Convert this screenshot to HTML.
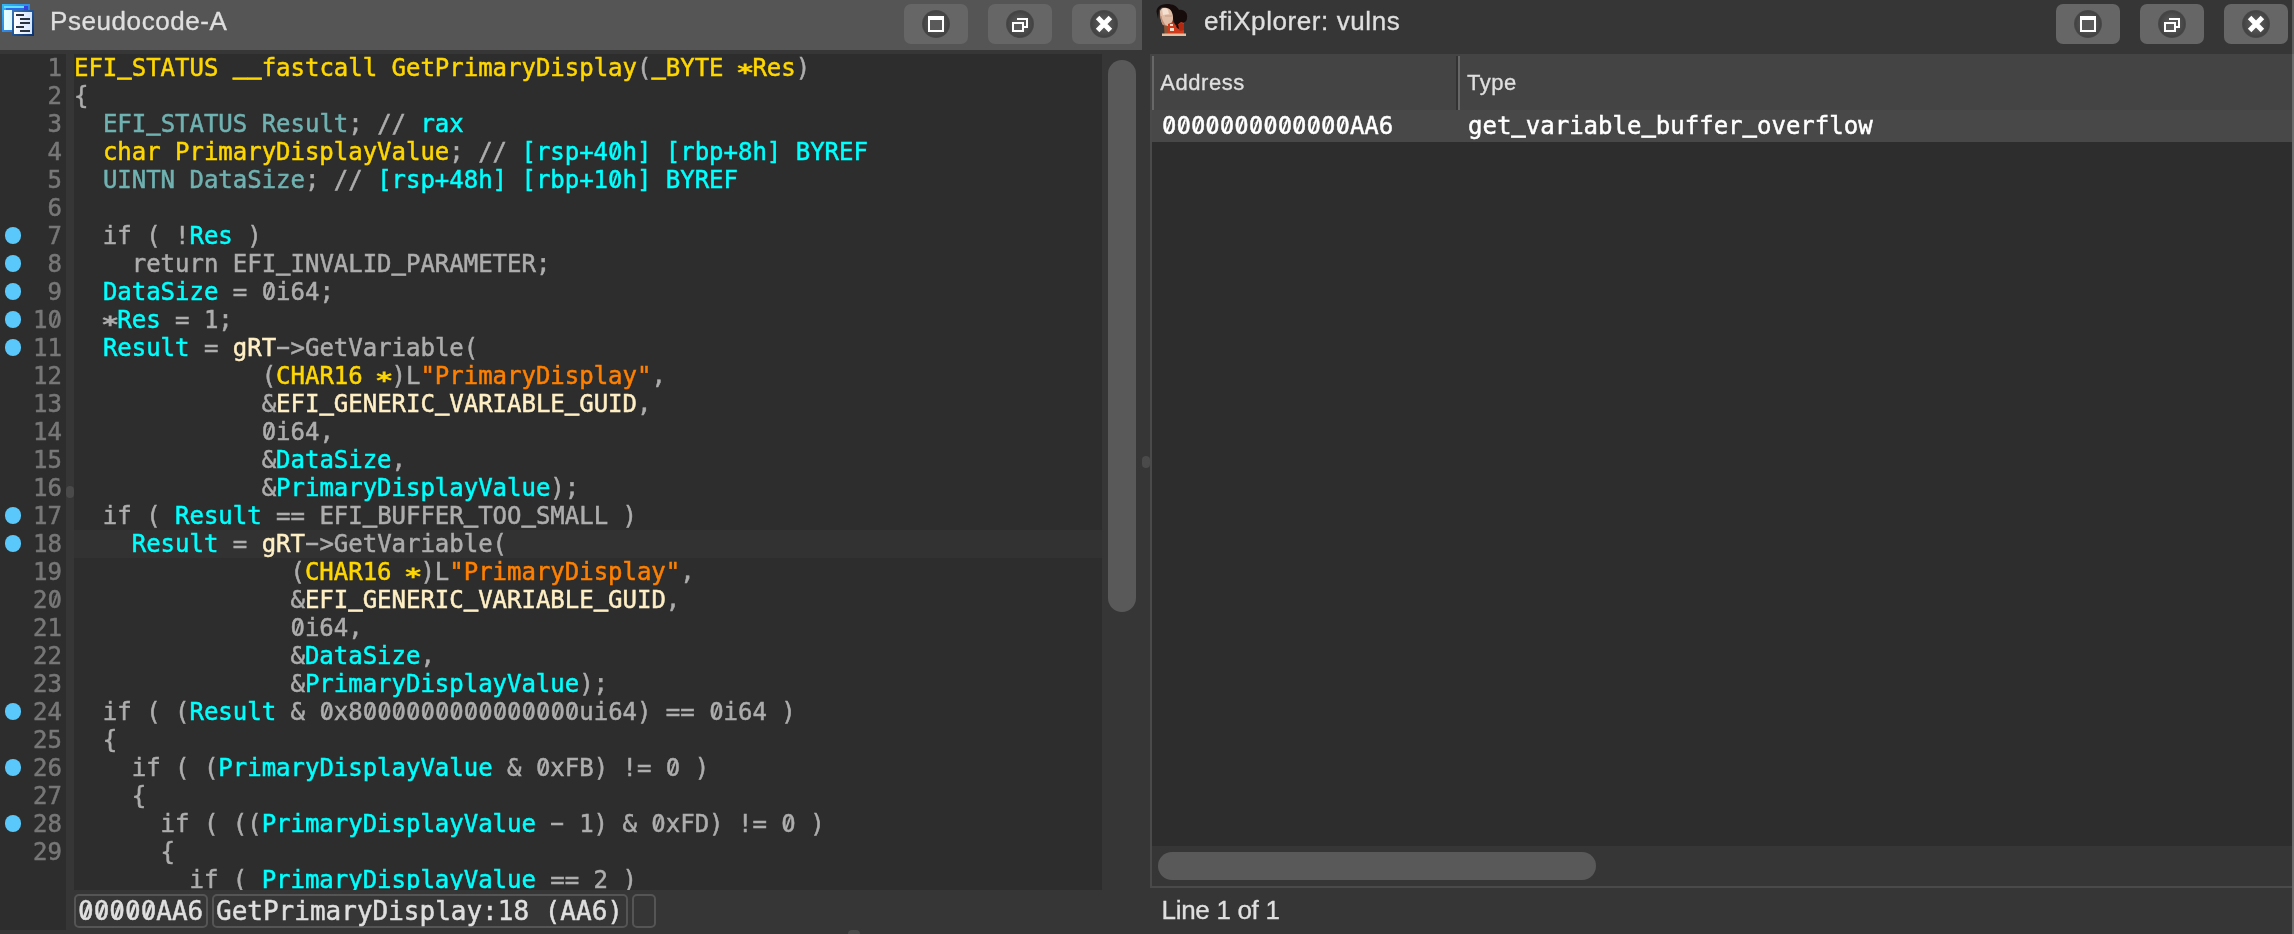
<!DOCTYPE html>
<html lang="en">
<head>
<meta charset="utf-8">
<title>Pseudocode-A / efiXplorer: vulns</title>
<style>
*{box-sizing:border-box;margin:0;padding:0}
html,body{width:2294px;height:934px;overflow:hidden;background:#363636}
body{position:relative;font-family:"Liberation Sans",sans-serif;color:#dfdfdf}
#root{position:absolute;left:0;top:0;width:2294px;height:934px;will-change:transform}
.abs{position:absolute}
.mono{font-family:"DejaVu Sans Mono","Liberation Mono",monospace;-webkit-text-stroke:0.5px}
/* title bars */
#ltitle{left:0;top:0;width:1142px;height:50px;background:#555}
.ttl{-webkit-text-stroke:0.35px;letter-spacing:0.58px;position:absolute;top:6px;height:30px;line-height:30px;font-size:26px;color:#dfdfdf;white-space:nowrap}
.btn{position:absolute;top:4px;width:64px;height:40px;border-radius:7px;background:#666}
.btn svg{position:absolute;left:18px;top:6px;width:28px;height:28px}
/* left panel */
#gutter{left:0;top:54px;width:66px;height:876px;background:#2d2d2d}
#code{left:74px;top:54px;width:1028px;height:836px;background:#2d2d2d;overflow:hidden}
#hl{left:0;top:476px;width:1028px;height:28px;background:#323232}
.ln{position:absolute;left:0;width:62px;height:28px;line-height:28px;font-size:24px;text-align:right;color:#777;white-space:pre}
.cl{letter-spacing:-0.016px;position:absolute;left:0;height:28px;line-height:28px;font-size:24px;color:#adadad;white-space:pre}
.dot{position:absolute;left:4.6px;width:16.8px;height:16.8px;margin-top:-0.9px;border-radius:50%;background:#5ac8fa}
.u{display:inline-block;line-height:28px;transform-origin:50% 27.5px;transform:translateY(-2.4px) scaleY(1.45)}
.z{position:relative}
.z::before{content:"";position:absolute;left:.206em;top:.467em;width:.19em;height:.19em;border-radius:50%;background:var(--bg,#2d2d2d)}
.sb{--bg:#363636}.cell{--bg:#484848}
.z::after{content:"";position:absolute;left:.25em;top:.29em;width:.1em;height:.54em;background:currentColor;transform:rotate(20deg);border-radius:1px}
.a{display:inline-block;-webkit-text-stroke:0.9px;transform:translateY(5px) scale(1.3,0.92)}
.h{display:inline-block;transform:translateY(-1.5px) scaleX(1.85)}
.y{color:#ffd700}.c{color:#00ffff}.t{color:#70b2b2}.o{color:#ff8000}.m{color:#ffefc5}
#vthumb{left:1108px;top:60px;width:28px;height:552px;border-radius:14px;background:#595959}
.sb{position:absolute;top:894px;height:34px;border:2px solid #555;border-radius:5px;font-size:26px;line-height:30px;color:#dfdfdf;white-space:pre;padding-left:2px}
/* right panel */
#tbl{left:1150px;top:54px;width:1142px;height:834px;background:#2d2d2d;border:2px solid #4a4a4a;border-top:none;border-right:none}
#thead{left:1150px;top:54px;width:1142px;height:56px;background:#444}
#trow{left:1152px;top:110px;width:1140px;height:32px;background:#484848}
.hsep{position:absolute;top:56px;width:2px;height:54px;background:#676767}
.hd{-webkit-text-stroke:0.35px;letter-spacing:0.55px;position:absolute;top:68px;height:30px;line-height:30px;font-size:22px;color:#dfdfdf}
.cell{position:absolute;top:110px;height:32px;line-height:32px;font-size:24px;color:#fff;white-space:pre}
#hscroll{left:1152px;top:846px;width:1140px;height:40px;background:#363636}
#hthumb{left:1158px;top:852px;width:438px;height:28px;border-radius:14px;background:#595959}
</style>
</head>
<body>
<div id="root">
<!-- LEFT TITLE BAR -->
<div id="ltitle" class="abs"></div>
<div class="ttl" style="left:50px">Pseudocode-A</div>
<div class="ttl" style="left:1204px">efiXplorer: vulns</div>

<svg width="0" height="0" style="position:absolute">
<defs>
<radialGradient id="cg" cx="50%" cy="50%" r="50%"><stop offset="0" stop-color="#5e5e5e"/><stop offset="0.55" stop-color="#505050"/><stop offset="0.9" stop-color="#434343"/><stop offset="1" stop-color="#4a4a4a"/></radialGradient>
<linearGradient id="ib1" x1="0" y1="0" x2="1" y2="1"><stop offset="0" stop-color="#35b6f6"/><stop offset="1" stop-color="#2b5fd6"/></linearGradient>
<linearGradient id="ib2" x1="0" y1="0" x2="1" y2="1"><stop offset="0" stop-color="#3a78b8"/><stop offset="1" stop-color="#0a2f6e"/></linearGradient>
<linearGradient id="ib3" x1="0" y1="0" x2="1" y2="0"><stop offset="0" stop-color="#e8ffff"/><stop offset="1" stop-color="#c6ecff"/></linearGradient>
<linearGradient id="ib4" x1="0" y1="0" x2="1" y2="0"><stop offset="0" stop-color="#ffffff"/><stop offset="1" stop-color="#d4e6ff"/></linearGradient>
</defs></svg>
<div class="btn" style="left:904px"><svg viewBox="0 0 28 28"><circle cx="14" cy="14" r="14" fill="url(#cg)"/><rect x="6" y="6" width="16" height="16" fill="#fff"/><rect x="8" y="10" width="12" height="10" fill="#5a5a5a"/></svg></div>
<div class="btn" style="left:988px"><svg viewBox="0 0 28 28"><circle cx="14" cy="14" r="14" fill="url(#cg)"/><path d="M11 9H21V17H18" fill="none" stroke="#fff" stroke-width="2"/><rect x="7" y="13" width="10" height="8" fill="#5a5a5a" stroke="#fff" stroke-width="2"/></svg></div>
<div class="btn" style="left:1072px"><svg viewBox="0 0 28 28"><circle cx="14" cy="14" r="14" fill="url(#cg)"/><path d="M7.6 7.6L20.4 20.4M20.4 7.6L7.6 20.4" stroke="#fff" stroke-width="5" stroke-linecap="butt"/></svg></div>
<div class="btn" style="left:2056px"><svg viewBox="0 0 28 28"><circle cx="14" cy="14" r="14" fill="url(#cg)"/><rect x="6" y="6" width="16" height="16" fill="#fff"/><rect x="8" y="10" width="12" height="10" fill="#5a5a5a"/></svg></div>
<div class="btn" style="left:2140px"><svg viewBox="0 0 28 28"><circle cx="14" cy="14" r="14" fill="url(#cg)"/><path d="M11 9H21V17H18" fill="none" stroke="#fff" stroke-width="2"/><rect x="7" y="13" width="10" height="8" fill="#5a5a5a" stroke="#fff" stroke-width="2"/></svg></div>
<div class="btn" style="left:2224px"><svg viewBox="0 0 28 28"><circle cx="14" cy="14" r="14" fill="url(#cg)"/><path d="M7.6 7.6L20.4 20.4M20.4 7.6L7.6 20.4" stroke="#fff" stroke-width="5" stroke-linecap="butt"/></svg></div>
<svg class="abs" style="left:0;top:0" width="40" height="40" viewBox="0 0 40 40">
<rect x="2" y="4" width="28" height="28" fill="url(#ib1)"/>
<rect x="4" y="6" width="20" height="2" fill="#5fe0f8"/><rect x="24" y="6" width="4" height="4" fill="#3a3fe0"/><rect x="6" y="8" width="18" height="2" fill="#2a6ae8"/>
<rect x="4" y="10" width="24" height="20" fill="url(#ib3)"/>
<rect x="12" y="10" width="22" height="26" fill="url(#ib2)"/>
<rect x="14" y="12" width="18" height="22" fill="url(#ib4)"/>
<rect x="16" y="14" width="8" height="2" fill="#2a3440"/>
<rect x="20" y="18" width="10" height="2" fill="#2a3440"/>
<rect x="20" y="22" width="10" height="2" fill="#2a3440"/>
<rect x="16" y="26" width="8" height="2" fill="#2a3440"/>
<rect x="20" y="30" width="10" height="2" fill="#2a3440"/>
</svg>
<svg class="abs" style="left:1140px;top:0" width="60" height="40" viewBox="0 0 60 40">
<path d="M17 14C15 8 20 4 27 4C33 4 37 6 39 10C44 9 48 13 47 18C47 22 44 22 43 23L37 27L34 22L31 10L22 7L19 10L18 19Z" fill="#170c0c"/>
<path d="M20 12C20 8 24 7 27 8C31 9 33 13 33 18C33 22 31 25 28 26L23 25C21 22 20 17 20 12Z" fill="#e2bda6"/>
<path d="M22 9C24 7 27 8 28 10L29 14L23 15Z" fill="#f4e0d0"/>
<path d="M20 16C21 20 22 23 23 25L26 25.5C24 23 22 20 21.5 16Z" fill="#c08c74"/>
<path d="M25 15H32V17H25Z" fill="#cfa792" opacity=".7"/>
<path d="M28 24L33 22L36 26L41 22L44 23L44 34L28 34Z" fill="#d23a1c"/>
<path d="M38 25L41 23L44 24V30L40 31L38 28Z" fill="#b42810"/>
<path d="M36 26L38 24L39 29L37 28Z" fill="#170c0c"/>
<rect x="30" y="24" width="3" height="2" fill="#f0d8c8"/><rect x="30" y="28" width="4" height="3" fill="#f0e0d0"/>
<path d="M24 26L28 26L28 34L24.5 34Z" fill="#8e5434"/>
<rect x="22" y="33.5" width="24" height="2.5" fill="#e4bea2"/>
</svg>
<!-- LEFT PANEL -->
<div id="gutter" class="abs mono">
<div class="ln" style="top:0px">1</div>
<div class="ln" style="top:28px">2</div>
<div class="ln" style="top:56px">3</div>
<div class="ln" style="top:84px">4</div>
<div class="ln" style="top:112px">5</div>
<div class="ln" style="top:140px">6</div>
<div class="ln" style="top:168px">7</div>
<div class="dot" style="top:174px"></div>
<div class="ln" style="top:196px">8</div>
<div class="dot" style="top:202px"></div>
<div class="ln" style="top:224px">9</div>
<div class="dot" style="top:230px"></div>
<div class="ln" style="top:252px">1<span class="z">0</span></div>
<div class="dot" style="top:258px"></div>
<div class="ln" style="top:280px">11</div>
<div class="dot" style="top:286px"></div>
<div class="ln" style="top:308px">12</div>
<div class="ln" style="top:336px">13</div>
<div class="ln" style="top:364px">14</div>
<div class="ln" style="top:392px">15</div>
<div class="ln" style="top:420px">16</div>
<div class="ln" style="top:448px">17</div>
<div class="dot" style="top:454px"></div>
<div class="ln" style="top:476px">18</div>
<div class="dot" style="top:482px"></div>
<div class="ln" style="top:504px">19</div>
<div class="ln" style="top:532px">2<span class="z">0</span></div>
<div class="ln" style="top:560px">21</div>
<div class="ln" style="top:588px">22</div>
<div class="ln" style="top:616px">23</div>
<div class="ln" style="top:644px">24</div>
<div class="dot" style="top:650px"></div>
<div class="ln" style="top:672px">25</div>
<div class="ln" style="top:700px">26</div>
<div class="dot" style="top:706px"></div>
<div class="ln" style="top:728px">27</div>
<div class="ln" style="top:756px">28</div>
<div class="dot" style="top:762px"></div>
<div class="ln" style="top:784px">29</div>
<div class="abs" style="left:66px;top:432px;width:8px;height:12px;border-radius:4px;background:#4a4a4a"></div>
</div>
<div id="code" class="abs mono"><div id="hl" class="abs"></div>
<div class="cl" style="top:0px"><span class="y">EFI<span class="u">_</span>STATUS <span class="u">__</span>fastcall GetPrimaryDisplay</span>(<span class="y"><span class="u">_</span>BYTE <span class="a">*</span>Res</span>)</div>
<div class="cl" style="top:28px">{</div>
<div class="cl" style="top:56px">  <span class="t">EFI<span class="u">_</span>STATUS Result</span>; // <span class="c">rax</span></div>
<div class="cl" style="top:84px">  <span class="y">char PrimaryDisplayValue</span>; // <span class="c">[rsp+4<span class="z">0</span>h] [rbp+8h] BYREF</span></div>
<div class="cl" style="top:112px">  <span class="t">UINTN DataSize</span>; // <span class="c">[rsp+48h] [rbp+1<span class="z">0</span>h] BYREF</span></div>
<div class="cl" style="top:168px">  if ( !<span class="c">Res</span> )</div>
<div class="cl" style="top:196px">    return EFI<span class="u">_</span>INVALID<span class="u">_</span>PARAMETER;</div>
<div class="cl" style="top:224px">  <span class="c">DataSize</span> = <span class="z">0</span>i64;</div>
<div class="cl" style="top:252px">  <span class="a">*</span><span class="c">Res</span> = 1;</div>
<div class="cl" style="top:280px">  <span class="c">Result</span> = <span class="m">gRT</span><span class="h">-</span>&gt;GetVariable(</div>
<div class="cl" style="top:308px">             (<span class="y">CHAR16 <span class="a">*</span></span>)L<span class="o">"PrimaryDisplay"</span>,</div>
<div class="cl" style="top:336px">             &amp;<span class="m">EFI<span class="u">_</span>GENERIC<span class="u">_</span>VARIABLE<span class="u">_</span>GUID</span>,</div>
<div class="cl" style="top:364px">             <span class="z">0</span>i64,</div>
<div class="cl" style="top:392px">             &amp;<span class="c">DataSize</span>,</div>
<div class="cl" style="top:420px">             &amp;<span class="c">PrimaryDisplayValue</span>);</div>
<div class="cl" style="top:448px">  if ( <span class="c">Result</span> == EFI<span class="u">_</span>BUFFER<span class="u">_</span>TOO<span class="u">_</span>SMALL )</div>
<div class="cl" style="top:476px">    <span class="c">Result</span> = <span class="m">gRT</span><span class="h">-</span>&gt;GetVariable(</div>
<div class="cl" style="top:504px">               (<span class="y">CHAR16 <span class="a">*</span></span>)L<span class="o">"PrimaryDisplay"</span>,</div>
<div class="cl" style="top:532px">               &amp;<span class="m">EFI<span class="u">_</span>GENERIC<span class="u">_</span>VARIABLE<span class="u">_</span>GUID</span>,</div>
<div class="cl" style="top:560px">               <span class="z">0</span>i64,</div>
<div class="cl" style="top:588px">               &amp;<span class="c">DataSize</span>,</div>
<div class="cl" style="top:616px">               &amp;<span class="c">PrimaryDisplayValue</span>);</div>
<div class="cl" style="top:644px">  if ( (<span class="c">Result</span> &amp; <span class="z">0</span>x8<span class="z">0</span><span class="z">0</span><span class="z">0</span><span class="z">0</span><span class="z">0</span><span class="z">0</span><span class="z">0</span><span class="z">0</span><span class="z">0</span><span class="z">0</span><span class="z">0</span><span class="z">0</span><span class="z">0</span><span class="z">0</span><span class="z">0</span>ui64) == <span class="z">0</span>i64 )</div>
<div class="cl" style="top:672px">  {</div>
<div class="cl" style="top:700px">    if ( (<span class="c">PrimaryDisplayValue</span> &amp; <span class="z">0</span>xFB) != <span class="z">0</span> )</div>
<div class="cl" style="top:728px">    {</div>
<div class="cl" style="top:756px">      if ( ((<span class="c">PrimaryDisplayValue</span> <span class="h">-</span> 1) &amp; <span class="z">0</span>xFD) != <span class="z">0</span> )</div>
<div class="cl" style="top:784px">      {</div>
<div class="cl" style="top:812px">        if ( <span class="c">PrimaryDisplayValue</span> == 2 )</div>
</div>
<div id="vthumb" class="abs"></div>

<!-- STATUS BAR LEFT -->
<div class="sb mono" style="left:74px;width:134px"><span class="z">0</span><span class="z">0</span><span class="z">0</span><span class="z">0</span><span class="z">0</span>AA6</div>
<div class="sb mono" style="left:212px;width:416px">GetPrimaryDisplay:18 (AA6)</div>
<div class="sb mono" style="left:632px;width:24px"></div>

<!-- RIGHT PANEL -->
<div id="tbl" class="abs"></div>
<div id="thead" class="abs"></div>
<div id="trow" class="abs"></div>
<div class="hsep" style="left:1152px"></div>
<div class="hsep" style="left:1456px;background:#333"></div>
<div class="hsep" style="left:1458px"></div>
<div class="hd" style="left:1160.3px">Address</div>
<div class="hd" style="left:1467px">Type</div>
<div class="cell mono" style="left:1162px"><span class="z">0</span><span class="z">0</span><span class="z">0</span><span class="z">0</span><span class="z">0</span><span class="z">0</span><span class="z">0</span><span class="z">0</span><span class="z">0</span><span class="z">0</span><span class="z">0</span><span class="z">0</span><span class="z">0</span>AA6</div>
<div class="cell mono" style="left:1468px">get<span class="u">_</span>variable<span class="u">_</span>buffer<span class="u">_</span>overflow</div>
<div id="hscroll" class="abs"></div>
<div id="hthumb" class="abs"></div>
<div class="ttl" style="left:1161.5px;top:895px;letter-spacing:-0.3px">Line 1 of 1</div>
<div class="abs" style="left:1142px;top:456px;width:8px;height:12px;border-radius:4px;background:#4a4a4a"></div>
<div class="abs" style="left:2292px;top:0;width:2px;height:54px;background:#5f5f5f"></div>
<div class="abs" style="left:2292px;top:54px;width:2px;height:880px;background:#6d6d6d"></div>
<div class="abs" style="left:848px;top:930px;width:12px;height:8px;border-radius:4px;background:#4a4a4a"></div>
</div>
</body>
</html>
